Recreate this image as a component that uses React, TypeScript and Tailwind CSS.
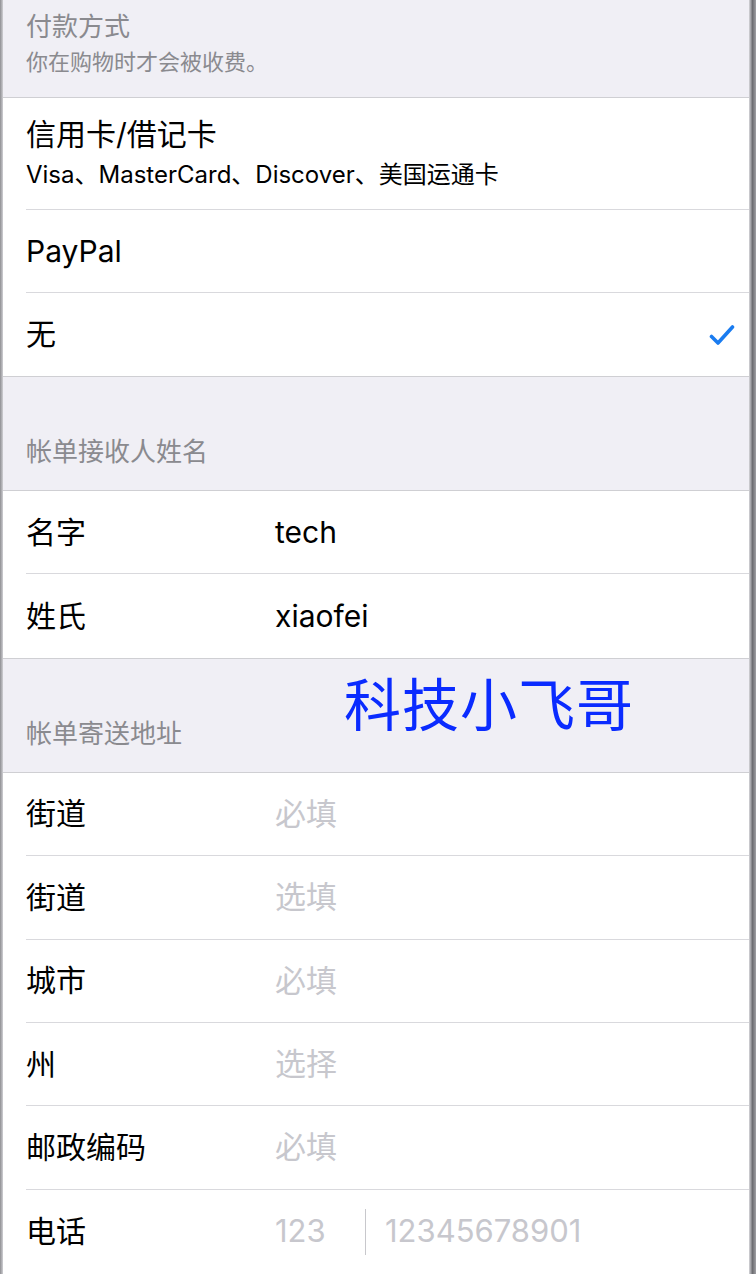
import React from "react";

const FONT = 'font-["Inter","Noto_Sans_CJK_SC",sans-serif]';

function Row({
  label,
  value,
  placeholder,
  last,
}: {
  label: string;
  value?: string;
  placeholder?: string;
  last?: boolean;
}) {
  return (
    <div className="pl-[23px]">
      <div
        className={
          "flex h-[83.4px] items-center " +
          (last ? "" : "border-b border-[#d9d9dd]")
        }
      >
        <div className="w-[249px] text-[30px] text-black">{label}</div>
        {value ? (
          <div className="text-[30px] text-black">{value}</div>
        ) : (
          <div className="text-[31px] text-[#c7c7cd]">{placeholder}</div>
        )}
      </div>
    </div>
  );
}

function Check() {
  return (
    <svg width="26" height="22" viewBox="0 0 26 22" fill="none">
      <path
        d="M2.5 12.5 L9 19 L23.5 3"
        stroke="#1a7cf0"
        strokeWidth="3.6"
        strokeLinecap="round"
        strokeLinejoin="round"
      />
    </svg>
  );
}

export default function App() {
  return (
    <div className={"flex min-h-[1274px] w-[756px] bg-[#f0eff5] " + FONT}>
      <div className="w-[3px] shrink-0 bg-gradient-to-r from-[#8e8e92] to-[#d0d0d4]" />
      <div className="flex-1">
        {/* payment header */}
        <div className="flex h-[98px] flex-col pl-[23px] pt-[10px] border-b border-[#cfcfd3]">
          <div className="text-[26px] leading-[34px] text-[#8a8a8f]">付款方式</div>
          <div className="mt-[3px] text-[22px] leading-[30px] text-[#8a8a8f]">你在购物时才会被收费。</div>
        </div>

        <div className="bg-white">
          <div className="pl-[23px]">
            <div className="flex h-[112px] flex-col justify-center border-b border-[#d9d9dd] pb-[2px]">
              <div className="text-[30px] leading-[38px] text-black">信用卡/借记卡</div>
              <div className="mt-[7px] text-[24px] leading-[30px] text-black">
                Visa、MasterCard、Discover、美国运通卡
              </div>
            </div>
          </div>
          <div className="pl-[23px]">
            <div className="flex h-[83px] items-center border-b border-[#d9d9dd] text-[30px] text-black">
              PayPal
            </div>
          </div>
          <div className="flex h-[83px] items-center justify-between pl-[23px] pr-[14px] text-[30px] text-black">
            <span>无</span>
            <Check />
          </div>
        </div>

        {/* billing name */}
        <div className="flex h-[115px] items-end border-y border-[#cfcfd3] pb-[21px] pl-[23px]">
          <div className="text-[26px] leading-[34px] text-[#8a8a8f]">帐单接收人姓名</div>
        </div>
        <div className="bg-white">
          <Row label="名字" value="tech" />
          <Row label="姓氏" value="xiaofei" last />
        </div>

        {/* billing address */}
        <div className="flex h-[115px] items-end border-y border-[#cfcfd3] pb-[21px] pl-[23px]">
          <div className="w-[318px] text-[26px] leading-[34px] text-[#8a8a8f]">帐单寄送地址</div>
          <div className="mb-[4px] self-center pt-[6px] text-[57px] leading-none tracking-[1px] text-[#0a2bff]">
            科技小飞哥
          </div>
        </div>
        <div className="bg-white">
          <Row label="街道" placeholder="必填" />
          <Row label="街道" placeholder="选填" />
          <Row label="城市" placeholder="必填" />
          <Row label="州" placeholder="选择" />
          <Row label="邮政编码" placeholder="必填" />
          <div className="pl-[23px]">
            <div className="flex h-[85px] items-center border-b border-[#cfcfd3]">
              <div className="w-[249px] text-[30px] text-black">电话</div>
              <div className="w-[90px] text-[31px] text-[#c7c7cd]">123</div>
              <div className="h-[46px] w-px bg-[#c8c8cc]" />
              <div className="pl-[19px] text-[31px] text-[#c7c7cd]">12345678901</div>
            </div>
          </div>
        </div>
      </div>
      <div className="w-[7px] shrink-0 bg-gradient-to-r from-[#d8d8dc] via-[#6e6e72] to-[#a0a0a4]" />
    </div>
  );
}
